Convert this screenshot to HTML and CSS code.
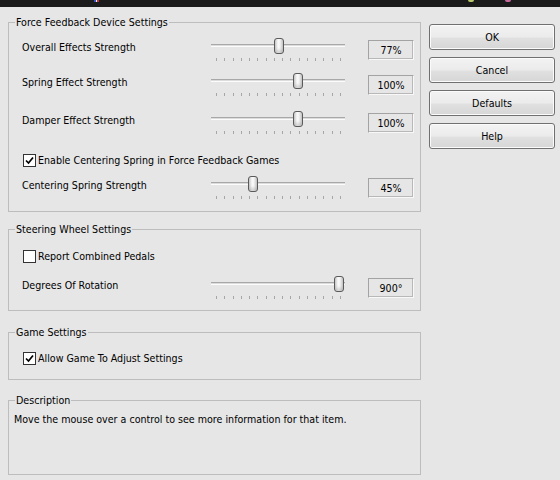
FILE: index.html
```html
<!DOCTYPE html>
<html>
<head>
<meta charset="utf-8">
<link rel="stylesheet" href="styles.css">
</head>
<body>
<div class="titlebar">
  <span class="tb-flag"></span>
  <span class="tb-dot tb-yellow"></span>
  <span class="tb-dot tb-pink"></span>
</div>
<div class="main">
  <div class="panels">
    <fieldset class="group g1">
      <legend>Force Feedback Device Settings</legend>
      <div class="row r1">
        <span class="label">Overall Effects Strength</span>
        <div class="slider"><div class="track"></div><div class="ticks"><i></i><i></i><i></i><i></i><i></i><i></i><i></i><i></i><i></i><i></i><i></i><i></i><i></i><i></i><i></i><i></i></div><div class="thumb" style="left:63px"></div></div>
        <div class="value">77%</div>
      </div>
      <div class="row r2">
        <span class="label">Spring Effect Strength</span>
        <div class="slider"><div class="track"></div><div class="ticks"><i></i><i></i><i></i><i></i><i></i><i></i><i></i><i></i><i></i><i></i><i></i><i></i><i></i><i></i><i></i><i></i></div><div class="thumb" style="left:82px"></div></div>
        <div class="value">100%</div>
      </div>
      <div class="row r3">
        <span class="label">Damper Effect Strength</span>
        <div class="slider"><div class="track"></div><div class="ticks"><i></i><i></i><i></i><i></i><i></i><i></i><i></i><i></i><i></i><i></i><i></i><i></i><i></i><i></i><i></i><i></i></div><div class="thumb" style="left:82px"></div></div>
        <div class="value">100%</div>
      </div>
      <label class="check c1">
        <span class="box checked"><svg viewBox="0 0 11 11" width="11" height="11"><path d="M2 5.5 L4.5 8 L9 2.5" fill="none" stroke="#000" stroke-width="1.7"/></svg></span>
        <span>Enable Centering Spring in Force Feedback Games</span>
      </label>
      <div class="row r4">
        <span class="label">Centering Spring Strength</span>
        <div class="slider"><div class="track"></div><div class="ticks"><i></i><i></i><i></i><i></i><i></i><i></i><i></i><i></i><i></i><i></i><i></i><i></i><i></i><i></i><i></i><i></i></div><div class="thumb" style="left:37px"></div></div>
        <div class="value">45%</div>
      </div>
    </fieldset>

    <fieldset class="group g2">
      <legend>Steering Wheel Settings</legend>
      <label class="check c2">
        <span class="box"></span>
        <span>Report Combined Pedals</span>
      </label>
      <div class="row r5">
        <span class="label">Degrees Of Rotation</span>
        <div class="slider"><div class="track"></div><div class="ticks"><i></i><i></i><i></i><i></i><i></i><i></i><i></i><i></i><i></i><i></i><i></i><i></i><i></i><i></i><i></i><i></i></div><div class="thumb" style="left:123px"></div></div>
        <div class="value">900°</div>
      </div>
    </fieldset>

    <fieldset class="group g3">
      <legend>Game Settings</legend>
      <label class="check c3">
        <span class="box checked"><svg viewBox="0 0 11 11" width="11" height="11"><path d="M2 5.5 L4.5 8 L9 2.5" fill="none" stroke="#000" stroke-width="1.7"/></svg></span>
        <span>Allow Game To Adjust Settings</span>
      </label>
    </fieldset>

    <fieldset class="group g4">
      <legend>Description</legend>
      <p class="desc">Move the mouse over a control to see more information for that item.</p>
    </fieldset>
  </div>

  <div class="buttons">
    <button class="btn">OK</button>
    <button class="btn">Cancel</button>
    <button class="btn">Defaults</button>
    <button class="btn">Help</button>
  </div>
</div>
</body>
</html>
```

FILE: styles.css
```css
* { box-sizing: border-box; }
html, body {
  margin: 0;
  padding: 0;
  background: #e6e6e6;
}
body {
  width: 560px;
  height: 480px;
  overflow: hidden;
  font-family: "DejaVu Sans Condensed", "DejaVu Sans", sans-serif;
  font-size: 10.6px;
  color: #000;
}
.titlebar {
  height: 7px;
  background: #1b1b1b;
  display: flex;
  align-items: flex-start;
  overflow: hidden;
}
.tb-flag {
  width: 5px;
  height: 2px;
  margin-left: 94px;
  background: linear-gradient(90deg, #3050c0 0 33%, #f0f0f0 33% 66%, #c03030 66%);
}
.tb-dot {
  width: 6px;
  height: 2px;
  border-radius: 0 0 3px 3px;
}
.tb-yellow { margin-left: 369px; background: #b8c86a; }
.tb-pink { margin-left: 31px; background: #c86a9c; }

.main {
  display: flex;
  padding-left: 8px;
}
.panels {
  width: 413px;
  display: flex;
  flex-direction: column;
}
.group {
  margin: 0;
  padding: 0;
  border: 1px solid #bdbdbd;
  min-width: 0;
}
.group legend {
  margin-left: 6px;
  padding: 0 1px;
  line-height: 14px;
  height: 14px;
}
.g1 { margin-top: 8px; padding-bottom: 11px; }
.g2 { margin-top: 10px; padding-bottom: 10px; }
.g3 { margin-top: 14px; padding-bottom: 14px; }
.g4 { margin-top: 13px; padding-bottom: 48px; }

.row {
  display: grid;
  grid-template-columns: 189px 134px 46px;
  height: 24px;
  margin-left: 13px;
}
.row .value { margin-left: 23px; }
.r1 { margin-top: 9px; }
.r2 { margin-top: 11px; }
.r3 { margin-top: 14px; }
.r4 { margin-top: 9px; }
.r5 { margin-top: 13px; }

.label {
  line-height: 14px;
  margin-top: 2px;
}
.slider {
  position: relative;
  height: 24px;
}
.track {
  position: absolute;
  left: 0;
  right: 0;
  top: 6px;
  height: 3px;
  border-top: 1px solid #a8a8a8;
  border-bottom: 1px solid #fcfcfc;
  background: #dcdcdc;
}
.ticks {
  position: absolute;
  left: 5px;
  width: 125px;
  top: 20px;
  height: 3px;
  display: flex;
  justify-content: space-between;
}
.ticks i {
  width: 1px;
  height: 3px;
  background: #a6a6a6;
}
.thumb {
  position: absolute;
  top: 0;
  width: 10px;
  height: 16px;
  border: 1px solid #5a5a5a;
  border-radius: 3px;
  background: linear-gradient(90deg, #cfcfcf 0%, #fafafa 40%, #f4f4f4 60%, #cacaca 100%);
  box-shadow: inset 0 -3px 3px rgba(150,150,150,0.35);
}
.value {
  width: 46px;
  height: 20px;
  margin-top: 2px;
  border: 1px solid #a3a3a3;
  border-right-color: #f8f8f8;
  border-bottom-color: #f8f8f8;
  box-shadow: inset -1px -1px 0 #b8b8b8;
  text-align: center;
  line-height: 18px;
}

.check {
  display: flex;
  align-items: center;
  height: 14px;
  line-height: 14px;
  margin-left: 13px;
}
.check .box {
  width: 13px;
  height: 13px;
  margin-left: 1px;
  margin-right: 2px;
  border: 1px solid #333;
  background: #fff;
  display: flex;
  align-items: center;
  justify-content: center;
}
.c1 { margin-top: 18px; }
.c2 { margin-top: 13px; }
.c3 { margin-top: 12px; }

.desc {
  margin: 5px 0 0 5px;
  line-height: 14px;
}

.buttons {
  margin-left: 8px;
  padding-top: 17px;
  display: flex;
  flex-direction: column;
  gap: 7px;
}
.btn {
  width: 126px;
  height: 26px;
  padding: 0;
  font: inherit;
  color: #000;
  border: 1px solid #707070;
  border-radius: 3px;
  background: linear-gradient(#f3f3f3 0%, #ebebeb 50%, #e0e0e0 55%, #d6d6d6 100%);
  box-shadow: inset 0 0 0 1px #fbfbfb;
}
```
